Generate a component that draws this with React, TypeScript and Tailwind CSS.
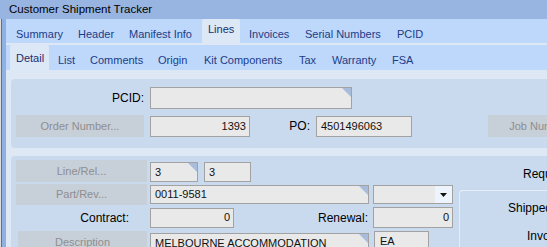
import React from "react";

const tabs1 = [
  { label: "Summary", cls: "w-[62px] ml-[4px]" },
  { label: "Header", cls: "w-[51px]" },
  { label: "Manifest Info", cls: "w-[79px]" },
  { label: "Lines", cls: "w-[38px]", sel: true },
  { label: "Invoices", cls: "w-[56px] ml-[3px]" },
  { label: "Serial Numbers", cls: "w-[92px]" },
  { label: "PCID", cls: "w-[40px]" },
];

const tabs2 = [
  { label: "Detail", cls: "w-[39px] ml-[4px]", sel: true },
  { label: "List", cls: "w-[32px] ml-[3px]" },
  { label: "Comments", cls: "w-[68px]" },
  { label: "Origin", cls: "w-[46px]" },
  { label: "Kit Components", cls: "w-[95px]" },
  { label: "Tax", cls: "w-[33px]" },
  { label: "Warranty", cls: "w-[60px]" },
  { label: "FSA", cls: "w-[40px]" },
];

function Corner() {
  return (
    <span className="absolute top-0 right-0 w-[9px] h-[9px] bg-[#a8bddb] [clip-path:polygon(0_0,100%_0,100%_100%)]" />
  );
}

function Btn({ label, cls }: { label: string; cls: string }) {
  return (
    <div
      className={
        "shrink-0 flex items-center justify-center bg-[#c7cfd9] text-[11px] text-[#8e8e8e] whitespace-nowrap " +
        cls
      }
    >
      {label}
    </div>
  );
}

function Field({
  value,
  cls,
  right,
  corner,
}: {
  value?: string;
  cls: string;
  right?: boolean;
  corner?: boolean;
}) {
  return (
    <div
      className={
        "relative shrink-0 flex items-center border border-[#a2a2a2] bg-[#e9e9e9] text-[11px] text-[#111] whitespace-nowrap overflow-hidden " +
        (right ? "justify-end pr-[3px] " : "pl-[4px] ") +
        cls
      }
    >
      {value}
      {corner && <Corner />}
    </div>
  );
}

export default function App() {
  return (
    <div className="w-[547px] h-[247px] overflow-hidden bg-[#98b4e1] flex flex-col font-['Liberation_Sans',Arial,sans-serif]">
      <div className="h-[19px] shrink-0 flex items-center pl-[9px] text-[11.5px] text-black whitespace-nowrap">
        Customer Shipment Tracker
      </div>
      <div className="flex flex-1 min-h-0">
        <div className="w-[1px] shrink-0 bg-[#dcdcdc]" />
        <div className="w-[1px] shrink-0 bg-[#6f6f6f]" />
        <div className="w-[4px] shrink-0 bg-[#8fb0e3]" />
        <div className="flex-1 min-w-0 bg-[#dee8f5] flex flex-col overflow-hidden">
          <div className="h-[24px] shrink-0 bg-[#bed8fb] flex text-[11px] text-[#203c88] whitespace-nowrap">
            {tabs1.map((t) => (
              <div
                key={t.label}
                className={
                  "shrink-0 h-full pl-[6px] flex items-center " +
                  (t.sel ? "bg-[#dde8f7] pb-[3px] rounded-t-[2px] text-[#1a2f6e] " : "pt-[6px] ") +
                  t.cls
                }
              >
                {t.label}
              </div>
            ))}
          </div>
          <div className="h-[25px] mt-[2px] shrink-0 bg-[#bed8fb] flex text-[11px] text-[#203c88] whitespace-nowrap">
            {tabs2.map((t) => (
              <div
                key={t.label}
                className={
                  "shrink-0 h-full pl-[6px] flex items-center " +
                  (t.sel ? "bg-[#dde8f7] pt-[1px] rounded-t-[2px] text-[#1a2f6e] " : "pt-[5px] ") +
                  t.cls
                }
              >
                {t.label}
              </div>
            ))}
          </div>

          {/* Panel 1 */}
          <div className="mt-[9px] ml-[5px] w-[560px] h-[69px] shrink-0 bg-[#c9daef] rounded-[4px] pt-[8px] flex flex-col">
            <div className="h-[22px] flex items-center">
              <div className="w-[133px] shrink-0 text-right text-[12px] text-black">PCID:</div>
              <Field cls="ml-[6px] w-[202px] h-[22px]" corner />
            </div>
            <div className="h-[22px] mt-[6px] flex items-center">
              <Btn label="Order Number..." cls="ml-[5px] w-[128px] h-[22px]" />
              <Field value="1393" right cls="ml-[6px] w-[100px] h-[21px]" />
              <div className="w-[60px] shrink-0 text-right text-[12px] text-black">PO:</div>
              <Field value="4501496063" cls="ml-[6px] w-[96px] h-[21px]" />
              <Btn label="Job Number..." cls="ml-[76px] w-[111px] h-[22px]" />
            </div>
          </div>

          {/* Panel 2 */}
          <div className="mt-[8px] ml-[5px] w-[560px] h-[120px] shrink-0 bg-[#c9daef] rounded-[4px] flex">
            <div className="w-[448px] shrink-0 pt-[4px] flex flex-col">
              <div className="h-[22px] flex items-end">
                <Btn label="Line/Rel..." cls="ml-[5px] w-[131px] h-[22px]" />
                <Field value="3" cls="ml-[3px] w-[48px] h-[20px]" corner />
                <Field value="3" cls="ml-[6px] w-[47px] h-[20px]" />
              </div>
              <div className="h-[21px] mt-[2px] flex items-center">
                <Btn label="Part/Rev..." cls="ml-[5px] w-[131px] h-[21px]" />
                <Field value="0011-9581" cls="ml-[3px] w-[219px] h-[19px]" corner />
                <div className="relative ml-[4px] w-[80px] h-[19px] shrink-0 border border-[#a2a2a2] bg-[#e9e9e9] flex justify-end">
                  <div className="w-[17px] h-full bg-[#eef4fd] flex items-center justify-center">
                    <svg width="7" height="4" viewBox="0 0 7 4">
                      <polygon points="0,0 7,0 3.5,4" fill="#111" />
                    </svg>
                  </div>
                </div>
              </div>
              <div className="h-[21px] mt-[2px] flex items-center">
                <div className="w-[118px] shrink-0 text-right text-[12px] text-black">Contract:</div>
                <Field value="0" right cls="ml-[21px] w-[84px] h-[20px]" />
                <div className="w-[134px] shrink-0 text-right text-[12px] text-black">Renewal:</div>
                <Field value="0" right cls="ml-[5px] w-[80px] h-[21px]" />
              </div>
              <div className="h-[22px] mt-[3px] flex items-start">
                <Btn label="Description" cls="ml-[7px] w-[129px] h-[22px]" />
                <Field value="MELBOURNE ACCOMMODATION" cls="ml-[3px] mt-[2px] w-[219px] h-[20px]" corner />
                <Field value="EA" cls="ml-[5px] w-[55px] h-[21px] pl-[5px]" />
              </div>
            </div>
            <div className="flex-1 flex flex-col text-[12px] text-black whitespace-nowrap">
              <div className="pt-[11px] pl-[64px] leading-[14px]">Requested Date:</div>
              <div className="mt-[9px] h-[80px] border-t border-l border-[#e5edf8] rounded-tl-[4px] leading-[14px]">
                <div className="pt-[10px] pl-[48px]">Shipped Qty:</div>
                <div className="mt-[14px] pl-[67px]">Invoiced Qty:</div>
              </div>
            </div>
          </div>
        </div>
      </div>
    </div>
  );
}
